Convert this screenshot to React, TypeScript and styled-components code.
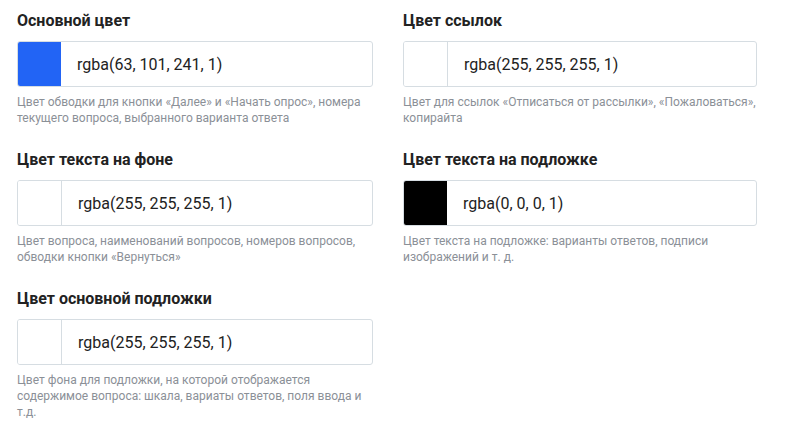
import styled, { createGlobalStyle } from 'styled-components';

const GlobalStyle = createGlobalStyle`
  body {
    margin: 0;
    background: #fff;
    font-family: Roboto, 'Liberation Sans', sans-serif;
  }
`;

type ColorSetting = {
  title: string;
  value: string;
  swatch: string;
  hint: string;
};

const SETTINGS: ColorSetting[] = [
  {
    title: 'Основной цвет',
    value: 'rgba(63, 101, 241, 1)',
    swatch: '#2264f5',
    hint: 'Цвет обводки для кнопки «Далее» и «Начать опрос», номера текущего вопроса, выбранного варианта ответа',
  },
  {
    title: 'Цвет ссылок',
    value: 'rgba(255, 255, 255, 1)',
    swatch: '#fff',
    hint: 'Цвет для ссылок «Отписаться от рассылки», «Пожаловаться», копирайта',
  },
  {
    title: 'Цвет текста на фоне',
    value: 'rgba(255, 255, 255, 1)',
    swatch: '#fff',
    hint: 'Цвет вопроса, наименований вопросов, номеров вопросов, обводки кнопки «Вернуться»',
  },
  {
    title: 'Цвет текста на подложке',
    value: 'rgba(0, 0, 0, 1)',
    swatch: '#000',
    hint: 'Цвет текста на подложке: варианты ответов, подписи изображений и т. д.',
  },
  {
    title: 'Цвет основной подложки',
    value: 'rgba(255, 255, 255, 1)',
    swatch: '#fff',
    hint: 'Цвет фона для подложки, на которой отображается содержимое вопроса: шкала, вариаты ответов, поля ввода и т.д.',
  },
];

const App = () => {
  return (
    <>
      <GlobalStyle />
      <Grid>
        {SETTINGS.map((item) => (
          <Field key={item.title}>
            <Title>{item.title}</Title>
            <Input>
              <Swatch $color={item.swatch} />
              <Value>{item.value}</Value>
            </Input>
            <Hint>{item.hint}</Hint>
          </Field>
        ))}
      </Grid>
    </>
  );
};

const Grid = styled.div`
  display: grid;
  grid-template-columns: 356px 354px;
  column-gap: 30px;
  row-gap: 24px;
  align-items: start;
  padding: 11px 0 0 17px;
`;

const Field = styled.div`
  display: flex;
  flex-direction: column;
`;

const Title = styled.h3`
  margin: 0 0 10px;
  font-size: 16px;
  line-height: 20px;
  font-weight: 700;
  color: #222;
`;

const Input = styled.div`
  display: flex;
  align-items: center;
  height: 46px;
  box-sizing: border-box;
  border: 1px solid #d6dde2;
  border-radius: 3px;
  background: #fff;
`;

const Swatch = styled.div<{ $color: string }>`
  flex: none;
  align-self: stretch;
  width: 43px;
  background: ${({ $color }) => $color};
  border-right: ${({ $color }) => ($color === '#fff' ? '1px solid #d6dde2' : 'none')};
  border-radius: 2px 0 0 2px;
`;

const Value = styled.span`
  padding-left: 16px;
  font-size: 16px;
  color: #222;
`;

const Hint = styled.p`
  margin: 7px 0 0;
  font-size: 12px;
  line-height: 16px;
  color: #8b9097;
`;

export default App;
